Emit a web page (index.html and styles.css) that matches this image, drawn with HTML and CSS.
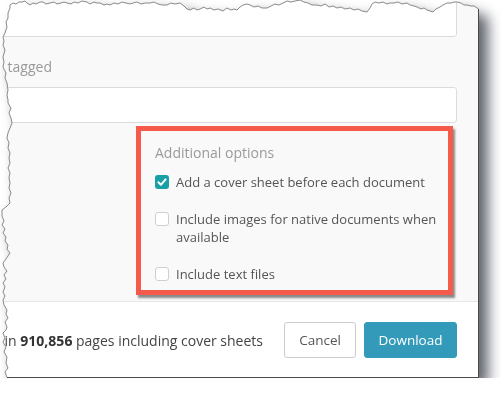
FILE: index.html
```html
<!DOCTYPE html>
<html lang="en">
<head>
    <meta charset="UTF-8">
    <meta name="viewport" content="width=device-width, initial-scale=1.0">
    <title>Download documents</title>
    <link rel="stylesheet" href="styles.css">
</head>
<body>
    <div class="sheet">
        <div class="panel">
            <div class="form">
                <div class="field field-top"></div>
                <div class="label">Documents tagged</div>
                <div class="field"></div>

                <div class="options">
                    <div class="options-title">Additional options</div>
                    <div class="check">
                        <span class="box checked">
                            <svg width="14" height="14" viewBox="0 0 14 14"><path d="M3.4 7.3 L5.9 9.8 L10.6 4.4" fill="none" stroke="#fff" stroke-width="2" stroke-linecap="round" stroke-linejoin="round"/></svg>
                        </span>
                        <span>Add a cover sheet before each document</span>
                    </div>
                    <div class="check">
                        <span class="box"></span>
                        <span>Include images for native documents when available</span>
                    </div>
                    <div class="check">
                        <span class="box"></span>
                        <span>Include text files</span>
                    </div>
                </div>
            </div>

            <div class="footer">
                <div class="summary"><span>Download 128 documents in <b>910,856</b> pages including cover sheets</span></div>
                <button class="btn">Cancel</button>
                <button class="btn btn-primary">Download</button>
            </div>
        </div>

        <!-- torn edge outline, same shape as the clip below -->
        <svg class="edge" width="479" height="378" viewBox="0 0 479 378">
            <use href="#tear-shape" fill="none" stroke="#8a8a8a" stroke-width="1"/>
            <path d="M478.5,9 L478.5,377.5 L7,377.5" fill="none" stroke="#4a4a4a" stroke-width="1"/>
        </svg>
    </div>

    <svg class="defs" width="0" height="0">
        <defs>
            <path id="tear-shape" d="M10,5 L13,3 L16,4 L19,2 L22,2 L25,1 L27,3 L30,5 L33,3 L36,4 L40,2 L43,2 L46,4 L50,3 L54,2 L57,4 L61,3 L64,2 L67,3 L71,4 L74,2 L78,3 L82,1 L87,2 L90,4 L94,2 L97,3 L100,3 L104,5 L107,4 L110,5 L114,3 L118,4 L122,2 L126,3 L130,4 L133,3 L137,2 L141,4 L145,3 L150,3 L154,2 L158,4 L162,5 L167,5 L171,3 L175,4 L180,3 L184,6 L187,9 L190,10 L194,8 L197,10 L200,9 L204,7 L207,9 L210,8 L214,10 L218,9 L223,11 L227,8 L231,10 L234,9 L237,10 L240,7 L243,5 L247,4 L250,5 L254,7 L258,6 L262,8 L267,8 L271,6 L275,4 L279,5 L283,3 L287,1 L291,2 L295,1 L300,0 L304,2 L308,3 L312,5 L317,5 L321,6 L325,4 L329,7 L333,6 L337,8 L341,7 L345,9 L350,8 L354,10 L358,9 L362,11 L367,12 L370,8 L372,4 L375,2 L379,3 L383,2 L387,4 L390,3 L394,3 L398,2 L402,4 L407,3 L410,5 L414,6 L417,7 L421,9 L424,8 L427,10 L430,11 L433,12 L436,9 L440,7 L443,5 L447,3 L451,3 L454,2 L457,2 L461,3 L464,5 L467,5 L471,6 L474,6 L478.5,9 L478.5,377.5 L7,377.5 L5,372 L8,368 L6,363 L7,357 L4,352 L6,347 L3,342 L5,338 L3,333 L6,330 L7,327 L5,322 L8,318 L6,314 L7,310 L4,305 L3,300 L5,296 L3,292 L5,287 L3,283 L6,279 L4,275 L7,271 L4,267 L3,263 L6,259 L10,253 L7,249 L8,245 L5,241 L6,237 L3,233 L5,229 L2,225 L4,221 L2,216 L2,210 L6,207 L10,203 L9,198 L11,193 L9,188 L10,183 L9,178 L10,173 L8,168 L10,163 L9,158 L10,153 L8,148 L9,143 L7,138 L8,133 L10,128 L12,123 L11,118 L9,113 L11,108 L8,103 L8,100 L7,95 L8,90 L7,83 L5,78 L6,73 L3,67 L4,62 L3,57 L5,50 L3,45 L4,41 L3,37 L5,33 L7,27 L6,22 L8,18 L8,13 L10,8 Z"/>
            <clipPath id="tear">
                <use href="#tear-shape"/>
            </clipPath>
        </defs>
    </svg>
</body>
</html>
```

FILE: styles.css
```css
body {
    margin: 0;
    background-color: #ffffff;
    font-family: "Open Sans", "Liberation Sans", sans-serif;
    font-size: 13px;
    color: #555;
}
.sheet {
    position: relative;
    width: 479px;
    height: 378px;
    filter: drop-shadow(9px 9px 7px rgba(30, 38, 48, 0.72));
}
.panel {
    width: 479px;
    height: 378px;
    display: flex;
    flex-direction: column;
    background-color: #f9f9f9;
    clip-path: url(#tear);
    overflow: hidden;
}
.edge {
    position: absolute;
    top: 0;
    left: 0;
    overflow: visible;
    pointer-events: none;
}
.defs {
    position: absolute;
}
.form {
    flex: 1;
    display: flex;
    flex-direction: column;
    margin-left: -71px;
    padding-right: 22px;
}
.field {
    height: 36px;
    box-sizing: border-box;
    background-color: #fff;
    border: 1px solid #dcdcdc;
    border-radius: 3px;
}
.field-top {
    height: 47px;
    margin-top: -10px;
}
.label {
    margin: 20px 0 10px;
    line-height: 20px;
    font-size: 14px;
    color: #999;
}
.options {
    align-self: flex-end;
    width: 317px;
    box-sizing: border-box;
    margin: 3px 4px 0 0;
    padding: 12px 6px 7px 14px;
    border: 5px solid #f65a4b;
    box-shadow: 2px 3px 2px rgba(0, 0, 0, 0.45);
}
.options-title {
    line-height: 20px;
    font-size: 14px;
    color: #9a9a9a;
    margin-bottom: 10px;
}
.check {
    display: flex;
    align-items: flex-start;
    gap: 7px;
    line-height: 18px;
    margin-bottom: 19px;
}
.check:last-child {
    margin-bottom: 0;
}
.box {
    flex: none;
    width: 14px;
    height: 14px;
    margin-top: 2px;
    box-sizing: border-box;
    border: 1px solid #cfcfcf;
    border-radius: 3px;
    background-color: #fff;
}
.box.checked {
    border: none;
    background-color: #17a0a6;
}
.box svg {
    display: block;
}
.footer {
    flex: 0 0 77px;
    box-sizing: border-box;
    display: flex;
    align-items: center;
    gap: 8px;
    padding-right: 22px;
    border-top: 1px solid #e6e6e6;
    background-color: #fff;
}
.summary {
    flex: 1;
    min-width: 0;
    display: flex;
    justify-content: flex-end;
    margin-right: 13px;
    font-size: 14px;
    color: #444;
}
.summary span {
    flex: none;
    white-space: nowrap;
}
.summary b {
    font-weight: 700;
    color: #333;
}
.btn {
    width: 72px;
    height: 36px;
    padding: 0;
    font-family: inherit;
    font-size: 13.5px;
    color: #555;
    background-color: #fff;
    border: 1px solid #ccc;
    border-radius: 3px;
}
.btn-primary {
    width: 93px;
    color: #fff;
    background-color: #339bb9;
    border-color: #339bb9;
}
```
